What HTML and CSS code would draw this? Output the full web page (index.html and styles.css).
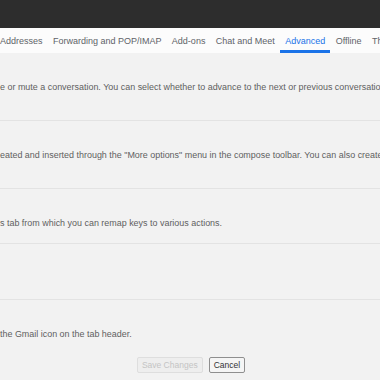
FILE: index.html
```html
<!DOCTYPE html>
<html>
<head>
<meta charset="utf-8">
<link rel="stylesheet" href="styles.css">
</head>
<body>
<div class="topbar"></div>
<nav class="tabs">
  <span class="tab">Addresses</span>
  <span class="tab">Forwarding and POP/IMAP</span>
  <span class="tab">Add-ons</span>
  <span class="tab">Chat and Meet</span>
  <span class="tab tab--active">Advanced</span>
  <span class="tab">Offline</span>
  <span class="tab">Themes</span>
</nav>
<main class="settings">
  <section class="setting setting--tall">
    <p class="desc">e or mute a conversation. You can select whether to advance to the next or previous conversation in the General settings page.</p>
  </section>
  <section class="setting setting--tall">
    <p class="desc">eated and inserted through the "More options" menu in the compose toolbar. You can also create a filter to automatically send templates.</p>
  </section>
  <section class="setting setting--mid">
    <p class="desc">s tab from which you can remap keys to various actions.</p>
  </section>
  <section class="setting setting--mid">
    <p class="desc"></p>
  </section>
  <section class="setting setting--last">
    <p class="desc">the Gmail icon on the tab header.</p>
  </section>
  <div class="actions">
    <button class="btn btn--disabled" disabled>Save Changes</button>
    <button class="btn">Cancel</button>
  </div>
</main>
</body>
</html>
```

FILE: styles.css
```css
html, body {
  margin: 0;
  padding: 0;
}
body {
  width: 380px;
  height: 380px;
  overflow: hidden;
  background: #f2f2f2;
  font-family: "Liberation Sans", Arial, sans-serif;
}
.topbar {
  height: 28px;
  background: #2d2d2d;
}
.tabs {
  display: flex;
  gap: 0.4px;
  height: 25px;
  background: #fcfcfc;
  margin-left: -5px;
  white-space: nowrap;
}
.tab {
  flex-shrink: 0;
  display: flex;
  align-items: center;
  padding: 0 5px;
  font-size: 9px;
  color: #606368;
}
.tab--active {
  color: #1a73e8;
  box-shadow: inset 0 -3px 0 #1a73e8;
}
.settings {
  display: flex;
  flex-direction: column;
}
.setting {
  box-sizing: border-box;
  padding-top: 28px;
  border-bottom: 1px solid #e3e3e3;
  white-space: nowrap;
  overflow: hidden;
}
.setting--tall { height: 68px; }
.setting--mid { height: 55px; }
.setting--mid + .setting--mid { height: 56px; }
.setting--last {
  border-bottom: none;
  height: 40px;
}
.desc {
  margin: 0;
  font-size: 8.95px;
  line-height: 12px;
  height: 12px;
  color: #5f5f5f;
}
.actions {
  display: flex;
  justify-content: center;
  gap: 6px;
  padding-top: 17px;
  margin-left: 2px;
}
.btn {
  box-sizing: border-box;
  height: 16px;
  padding: 0 4px;
  font-family: "Liberation Sans", Arial, sans-serif;
  font-size: 8.5px;
  line-height: 14px;
  color: #333;
  background: #f5f5f5;
  border: 1px solid #8f8f8f;
  border-radius: 2px;
}
.btn--disabled {
  color: #c4c4c4;
  background: #eeeeee;
  border-color: #dedede;
}
```
